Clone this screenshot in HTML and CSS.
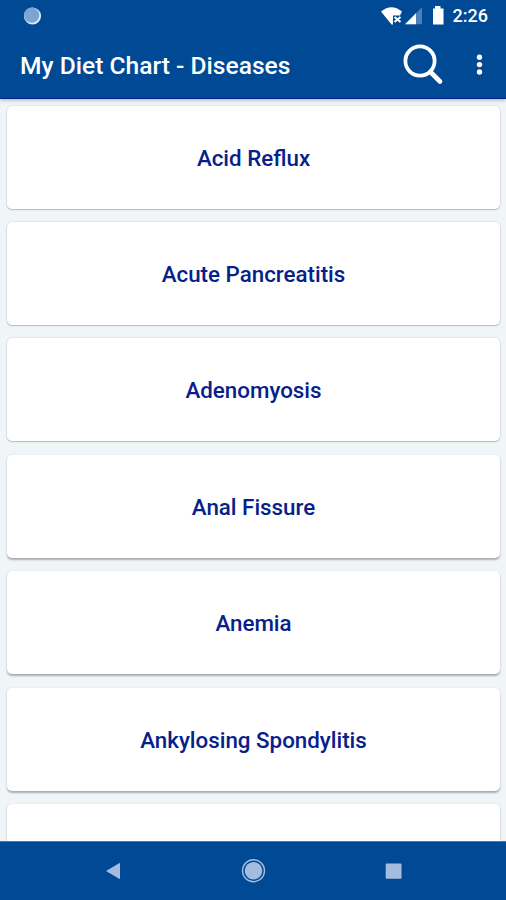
FILE: index.html
```html
<!DOCTYPE html>
<html lang="en">
<head>
<meta charset="utf-8">
<title>My Diet Chart - Diseases</title>
<link rel="stylesheet" href="styles.css">
</head>
<body>
<div class="app">
  <header class="header">
    <div class="status">
      <svg class="sync" width="20" height="20" viewBox="0 0 20 20"><circle cx="10.500" cy="10" r="8.600" fill="#dcebf8"/><circle cx="9.700" cy="9.100" r="7.700" fill="#7ca5d3"/></svg>
      <svg class="signals" width="64" height="22" viewBox="0 0 64 22">
        <path d="M1 6.500Q11.500-2 22 6.500L20 10.500H13V19.500L11.500 19.500Z" fill="#fff"/>
        <path d="M14.500 12L20.500 17M20.500 12L14.500 17" stroke="#fff" stroke-width="2"/>
        <path d="M25 19.300L42 2.300V19.300Z" fill="#4f80b5"/>
        <path d="M25 19.300L36 8.300V19.300Z" fill="#fff"/>
        <path d="M53 3.500H55V1H60.500V3.500H63.500V19.500H53Z" fill="#fff"/>
      </svg>
      <span class="clock">2:26</span>
    </div>
    <div class="toolbar">
      <h1 class="title">My Diet Chart - Diseases</h1>
      <svg class="search" width="42" height="44" viewBox="0 0 42 44" fill="none" stroke="#fff"><circle cx="17" cy="18" r="14.600" stroke-width="3.800"/><path d="M27.500 29L37 38.500" stroke-width="4.600" stroke-linecap="round"/></svg>
      <svg class="more" width="8" height="24" viewBox="0 0 8 24" fill="#fff"><circle cx="4.500" cy="4.200" r="2.700"/><circle cx="4.500" cy="11.600" r="2.700"/><circle cx="4.500" cy="19" r="2.700"/></svg>
    </div>
  </header>
  <main class="list">
    <div class="card outlined">Acid Reflux</div>
    <div class="card outlined">Acute Pancreatitis</div>
    <div class="card outlined">Adenomyosis</div>
    <div class="card">Anal Fissure</div>
    <div class="card">Anemia</div>
    <div class="card">Ankylosing Spondylitis</div>
    <div class="card"></div>
  </main>
  <nav class="nav">
    <svg width="330" height="58" viewBox="0 0 330 58" fill="#a4bcdf">
      <path d="M16 29L30 20.700V37.300Z"/>
      <circle cx="163.500" cy="28.800" r="8.800"/><circle cx="163.500" cy="28.800" r="11" fill="none" stroke="#a4bcdf" stroke-width="1.400"/>
      <rect x="295.700" y="21.500" width="15.800" height="15.300" rx="0.800"/>
    </svg>
  </nav>
</div>
</body>
</html>
```
FILE: styles.css
```css
* { box-sizing: border-box; }
body { margin: 0; font-family: Roboto, sans-serif; }
.app {
  display: flex;
  flex-direction: column;
  height: 900px;
  overflow: hidden;
  background: #f0f5f7;
}
.header {
  flex: none;
  height: 99px;
  background: #004994;
  border-bottom: 1px solid #0a2187;
  box-shadow: 0 1px 4px rgba(0, 0, 0, .3);
  color: #fff;
}
.status { display: flex; align-items: center; height: 31px; padding: 0 18px 0 22px; }
.signals { margin-left: auto; margin-right: 9px; }
.clock { font-size: 18px; font-weight: 500; line-height: 31px; }
.toolbar { display: flex; align-items: center; height: 67px; padding: 0 23px 0 20px; }
.title { margin: 0; padding-top: 2px; font-size: 24.6px; font-weight: 500; line-height: 68px; white-space: nowrap; }
.search { margin-left: auto; margin-right: 30px; }
.list {
  flex: 1;
  min-height: 0;
  overflow: hidden;
  display: flex;
  flex-direction: column;
  gap: 13.4px;
  padding: 6.6px 6px 0 7px;
}
.card {
  flex: none;
  display: flex;
  align-items: center;
  justify-content: center;
  height: 103px;
  padding-top: 1px;
  border-radius: 5px;
  background: #fff;
  box-shadow: 0 1.5px 2px rgba(0, 0, 0, .29), 0 0 3px rgba(0, 0, 0, .04);
  color: #07218a;
  font-size: 22.35px;
  font-weight: 500;
}
.outlined { box-shadow: 0 1px 1.5px rgba(0, 0, 0, .2), 0 0 0 1px #e3e8ea; }
.nav { flex: none; height: 59px; padding-left: 90px; background: #004994; border-top: 1px solid #4b78af; }
.nav svg { display: block; }
```
